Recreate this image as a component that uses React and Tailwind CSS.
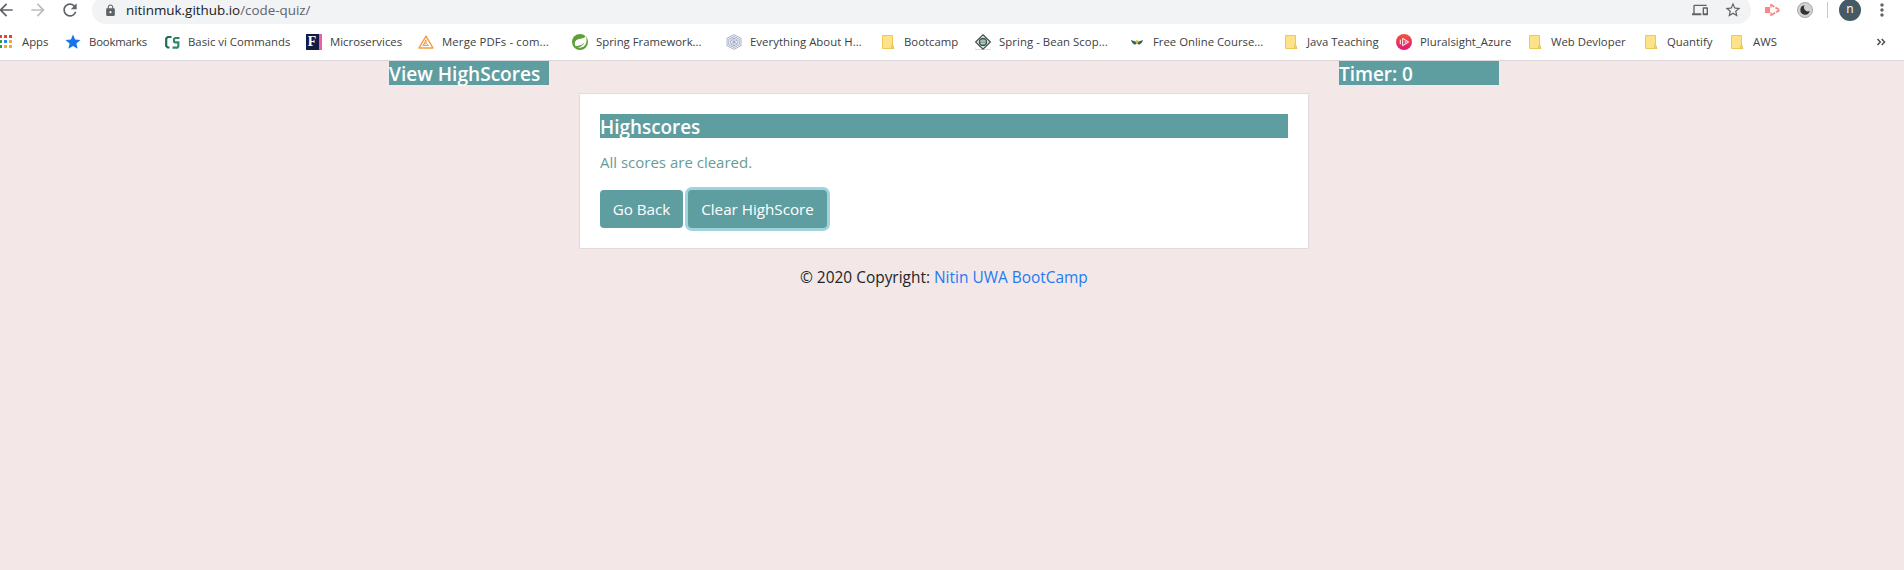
import React from "react";
import {
  MdArrowBack,
  MdArrowForward,
  MdRefresh,
  MdLock,
  MdDevices,
  MdStarBorder,
  MdStar,
  MdMoreVert,
} from "react-icons/md";

const FolderIcon = () => (
  <svg width="16" height="16" viewBox="0 0 16 16">
    <path d="M2.500 1.500h10v9.500l1.200 3.500H2.500z" fill="#fde28a" stroke="#ecc95c" />
    <path d="M11.500 14.500v-2.500l1-1.500 1.200 4z" fill="#f8d56b" stroke="#e3bd4a" strokeWidth=".7" />
  </svg>
);

const AppsIcon = () => (
  <svg width="16" height="16" viewBox="0 0 16 16">
    <path d="M1 1h3v3H1zM6 1h3v3H6zM11 1h3v3h-3z" fill="#e0433a" />
    <path d="M1 6h3v3H1zM1 11h3v3H1z" fill="#2f9e50" />
    <path d="M6 6h3v3H6z" fill="#2f86e8" />
    <path d="M11 6h3v3h-3zM6 11h3v3H6zM11 11h3v3h-3z" fill="#e8ae2c" />
  </svg>
);

const CsIcon = () => (
  <svg width="16" height="16" viewBox="0 0 16 16" fill="none" strokeWidth="2.200">
    <path d="M7.500 3H3.800L2.200 4.500v7.500l1.600 1.500H5.500" stroke="#1f6f54" />
    <path d="M15.500 4h-4.300L10 5v2.600l1 .8h3.300v4.100l-1 1.100H8.500" stroke="#2b8a63" />
  </svg>
);

const BookIcon = () => (
  <div className="flex size-4 bg-[#121a45]">
    <span className="w-3 text-center font-['Liberation_Serif',serif] text-[14px] leading-4 font-bold text-white">F</span>
    <span className="ml-auto w-[3px] bg-[#ee5fa0]" />
  </div>
);

const TriangleIcon = () => (
  <svg width="16" height="16" viewBox="0 0 16 16" fill="none" stroke="#f39a3c" strokeLinejoin="round">
    <path d="M8 2.200 15 14H1z" strokeWidth="1.400" />
    <path d="M8 5.800v3l2.500 2.700H5.300L8 5.800M8 8.800l-3.500 2.700" strokeWidth="1" />
  </svg>
);

const SpringIcon = () => (
  <svg width="16" height="16" viewBox="0 0 16 16">
    <circle cx="8" cy="8" r="8" fill="#5f9f3a" />
    <path d="M14 2c.9 3.600.8 7.200-1.200 9.400-2.500 2.700-6.100 2.300-9.300 2.100 5 .2 7.600-2 9-5.300-2.500 3.400-5.300 3.300-8.700 4.100-1.700-2.200-1.200-5.200 1.300-6.500C7.900 4.300 11.500 5.400 14 2z" fill="#fff" />
  </svg>
);

const HexIcon = () => (
  <svg width="16" height="16" viewBox="0 0 16 16" fill="none" stroke="#8b96b5" strokeWidth=".7">
    <path d="M8 .6 15 4.300v7.400L8 15.400 1 11.700V4.300z" fill="#f4f5f9" />
    <path d="M8 2.500 13.200 5.200v5.600L8 13.500l-5.200-2.700V5.200z" />
    <circle cx="8" cy="8" r="3.600" />
    <path d="M8 4v8M5 6l6 4M11 6l-6 4" />
  </svg>
);

const DiamondIcon = () => (
  <svg width="16" height="16" viewBox="0 0 16 16">
    <path d="M0 13v3h3M16 13v3h-3M1 15.500h14" stroke="#ddd" fill="none" />
    <path d="M8 .8 15.300 8 8 15.200.7 8z" fill="#e9f0ec" stroke="#45544d" strokeWidth="1.200" />
    <circle cx="8" cy="8" r="3.800" fill="#6f9082" stroke="#344a40" />
    <path d="M5.500 7h5M6 9.300h4.200" stroke="#dce7e1" />
  </svg>
);

const WingsIcon = () => (
  <svg width="16" height="16" viewBox="0 0 16 16">
    <path d="M2 6l4.500 1.500L8 9.300 6 10.700C4 10 2.700 8.500 2 6zM14 6l-4.500 1.500L8 9.300l2 1.400C12 10 13.300 8.500 14 6z" fill="#2c6b50" />
    <path d="M6 7.300 8 6l2 1.300-2 2.400z" fill="#e3b13a" />
  </svg>
);

const PluralsightIcon = () => (
  <svg width="16" height="16" viewBox="0 0 16 16">
    <defs>
      <linearGradient id="ps" x1="0" y1="0" x2="0" y2="1">
        <stop offset="0" stopColor="#f0553a" />
        <stop offset="1" stopColor="#e0177c" />
      </linearGradient>
    </defs>
    <circle cx="8" cy="8" r="8" fill="url(#ps)" />
    <path d="M6.700 4.300 12.700 8l-6 3.700zM4.300 5.700v4.600" fill="none" stroke="#fff" strokeWidth="1" />
    <path d="M8.700 6.300 11.200 8 8.700 9.700z" fill="#f9b4c8" />
  </svg>
);

const bookmarks = [
  ["Apps", "w-[67px]", <AppsIcon />],
  ["Bookmarks", "w-[99px] tracking-[-0.2px]", <MdStar className="-m-px size-[18px] shrink-0 text-[#1a73e8]" />],
  ["Basic vi Commands", "w-[142px]", <CsIcon />],
  ["Microservices", "w-[112px]", <BookIcon />],
  ["Merge PDFs - com...", "w-[154px] tracking-[0.14px]", <TriangleIcon />],
  ["Spring Framework...", "w-[154px]", <SpringIcon />],
  ["Everything About H...", "w-[154px] tracking-[0.05px]", <HexIcon />],
  ["Bootcamp", "w-[95px]", <FolderIcon />],
  ["Spring - Bean Scop...", "w-[154px] tracking-[0.06px]", <DiamondIcon />],
  ["Free Online Course...", "w-[154px]", <WingsIcon />],
  ["Java Teaching", "w-[113px]", <FolderIcon />],
  ["Pluralsight_Azure", "w-[131px]", <PluralsightIcon />],
  ["Web Devloper", "w-[116px]", <FolderIcon />],
  ["Quantify", "w-[86px]", <FolderIcon />],
  ["AWS", "w-[60px]", <FolderIcon />],
];

function Toolbar() {
  return (
    <div className="flex h-6 items-start overflow-hidden text-[#5f6368]">
      <div className="-ml-1 flex h-5 w-24 shrink-0 items-center gap-3">
        <MdArrowBack className="size-5 shrink-0" />
        <MdArrowForward className="size-5 shrink-0 text-[#bbbdbf]" />
        <MdRefresh className="size-5 shrink-0" />
      </div>
      <div className="-mt-1 flex h-7 w-[1659px] shrink-0 items-center rounded-full bg-[#f1f3f4] pr-[9px] pl-3">
        <MdLock className="size-[13px]" />
        <span className="ml-[9px] text-[13.4px] leading-5">
          <span className="text-[#202124]">nitinmuk.github.io</span>/code-quiz/
        </span>
        <MdDevices className="mr-4 ml-auto size-4" />
        <MdStarBorder className="size-[18px]" />
      </div>
      <div className="flex h-5 items-center">
        <svg className="ml-[13px]" width="18" height="16" viewBox="0 0 18 16">
          <path d="M1 5h5v6H1z" fill="#fb8585" />
          <path d="M7 2.700 15.700 8 7 13.300" fill="none" stroke="#fb8585" strokeWidth="1.800" strokeDasharray="4 1.200" />
          <path d="M7 2v12" stroke="#fb8585" strokeWidth="1.500" strokeDasharray="3.500 5" />
        </svg>
        <svg className="ml-[15px]" width="16" height="16" viewBox="0 0 16 16">
          <circle cx="8" cy="8" r="7.500" fill="#d2d2d2" stroke="#a8a8a8" />
          <path d="M7.700 3.300a4.700 4.700 0 1 0 5 5.500A3.800 3.800 0 0 1 7.700 3.300z" fill="#333" />
        </svg>
        <span className="ml-3.5 h-4 w-px bg-[#c6c8ca]" />
        <span className="-my-1 ml-[11px] flex size-[22px] items-center justify-center rounded-full bg-[#455a64] pb-0.5 text-[12px] text-white">n</span>
        <MdMoreVert className="ml-[11px] size-5" />
      </div>
    </div>
  );
}

function BookmarksBar() {
  return (
    <div className="flex h-[37px] items-center border-b border-[#dcd8da] text-[11.35px] leading-4 whitespace-nowrap text-[#3c4043]">
      <div className="-ml-0.5 flex">
        {bookmarks.map(([label, cls, icon]) => (
          <div key={label} className={"flex shrink-0 items-center gap-2 " + cls}>
            <span className="flex size-4 shrink-0 items-center justify-center">{icon}</span>
            <span>{label}</span>
          </div>
        ))}
      </div>
      <svg className="mr-[18px] ml-auto" width="10" height="8" viewBox="0 0 10 8" fill="none" stroke="#4a4e52" strokeWidth="1.500">
        <path d="M1.500 1 4.300 4 1.500 7M5.700 1 8.500 4 5.700 7" />
      </svg>
    </div>
  );
}

export default function App() {
  return (
    <div className="h-[570px] w-[1904px] overflow-hidden bg-[#f3e7e7] font-['Open_Sans',sans-serif]">
      <header className="bg-white">
        <Toolbar />
        <BookmarksBar />
      </header>
      <main className="flex items-start pl-[389px] text-white">
        <h5 className="h-6 w-40 bg-[#5f9ea0] pt-px text-[19.1px] leading-6 font-semibold">View HighScores</h5>
        <section className="mt-8 ml-[30px] h-[156px] w-[730px] border border-[#e2dadb] bg-white px-5 pt-5">
          <h5 className="mb-3 h-6 bg-[#5f9ea0] pt-px text-[18.9px] leading-6 font-semibold">Highscores</h5>
          <p className="mb-4 text-[15px] leading-6 text-[#689c97]">All scores are cleared.</p>
          <div className="flex gap-[5px] text-[15.2px]">
            <button className="h-[38px] w-[83px] rounded-[4px] bg-[#5f9ea0]">Go Back</button>
            <button className="h-[38px] w-[139px] rounded-[4px] bg-[#5f9ea0] ring-3 ring-[#a0d3dc]">Clear HighScore</button>
          </div>
        </section>
        <h5 className="ml-[30px] h-6 w-40 bg-[#5f9ea0] pt-px text-[18.9px] leading-6 font-semibold">Timer: 0</h5>
      </main>
      <footer className="mt-4 pl-[800px] text-[15.45px] leading-6 text-[#212529]">
        © 2020 Copyright: <a className="text-[#1f7bf2]">Nitin UWA BootCamp</a>
      </footer>
    </div>
  );
}
